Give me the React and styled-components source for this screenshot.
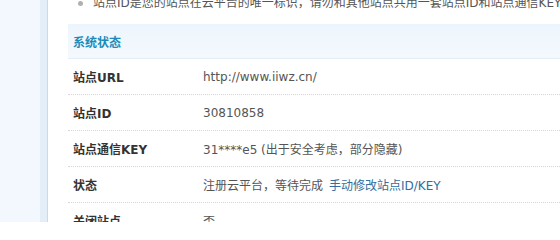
import styled, { createGlobalStyle } from "styled-components";

// Global reset for the page
const GlobalStyle = createGlobalStyle`
    body {
        margin: 0;
        overflow: hidden;
        background: #FFFFFF;
        font-family: "DejaVu Sans", "Noto Sans CJK SC", sans-serif;
        font-size: 12px;
    }
`;

// Rows of the site status table
const ROWS = [
    { label: "站点URL", value: "http://www.iiwz.cn/" },
    { label: "站点ID", value: "30810858" },
    { label: "站点通信KEY", value: "31****e5 (出于安全考虑，部分隐藏)" },
    { label: "状态", value: "注册云平台，等待完成", link: "手动修改站点ID/KEY" },
    { label: "关闭站点", value: "否" },
];

const App = () => {
    return (
        <>
            <GlobalStyle />
            <Page>
                <Sidebar>
                    <SidebarEdge />
                </Sidebar>
                <Main>
                    <Notice>
                        <NoticeItem>
                            站点ID是您的站点在云平台的唯一标识，请勿和其他站点共用一套站点ID和站点通信KEY
                        </NoticeItem>
                    </Notice>
                    <Table>
                        <Header>系统状态</Header>
                        {ROWS.map((row) => (
                            <Row key={row.label}>
                                <Label>{row.label}</Label>
                                <Value>
                                    {row.value}
                                    {row.link && <Link href="#">{row.link}</Link>}
                                </Value>
                            </Row>
                        ))}
                    </Table>
                </Main>
            </Page>
        </>
    );
};

const Page = styled.div`
    display: flex;
    height: 222px;
    overflow: hidden;
`;

// Left menu column (only its edge is visible)
const Sidebar = styled.div`
    display: flex;
    justify-content: flex-end;
    width: 47px;
    flex-shrink: 0;
    background: #F2F8FD;
    border-right: 1px solid #C6DBEE;
`;

const SidebarEdge = styled.div`
    width: 7px;
    background: #E4EEF8;
`;

const Main = styled.div`
    flex: 1;
    min-width: 0;
    padding-left: 20px;
    overflow: hidden;
`;

const Notice = styled.ul`
    list-style: none;
    margin: -6px 0 0 0;
    padding: 0;
`;

const NoticeItem = styled.li`
    position: relative;
    padding-left: 25px;
    line-height: 18px;
    color: #555555;
    white-space: nowrap;

    &::before {
        content: "";
        position: absolute;
        left: 10px;
        top: 7px;
        width: 5px;
        height: 5px;
        border-radius: 50%;
        background: #B0B0B0;
    }
`;

const Table = styled.div`
    margin-top: 12px;
`;

const Header = styled.div`
    display: flex;
    align-items: center;
    height: 34px;
    padding-left: 5px;
    background: linear-gradient(to bottom, #EDF5FC, #F4F9FE);
    border-bottom: 1px solid #E3EEF8;
    color: #1A8BBA;
    font-weight: bold;
`;

const Row = styled.div`
    display: flex;
    align-items: center;
    height: 35px;
    border-bottom: 1px dotted #D6D6D6;
`;

const Label = styled.div`
    width: 130px;
    padding-left: 5px;
    flex-shrink: 0;
    color: #333333;
    font-weight: bold;
`;

const Value = styled.div`
    color: #555555;
    white-space: nowrap;
`;

const Link = styled.a`
    margin-left: 6px;
    color: #2F6E9E;
    text-decoration: none;
`;

export default App;
